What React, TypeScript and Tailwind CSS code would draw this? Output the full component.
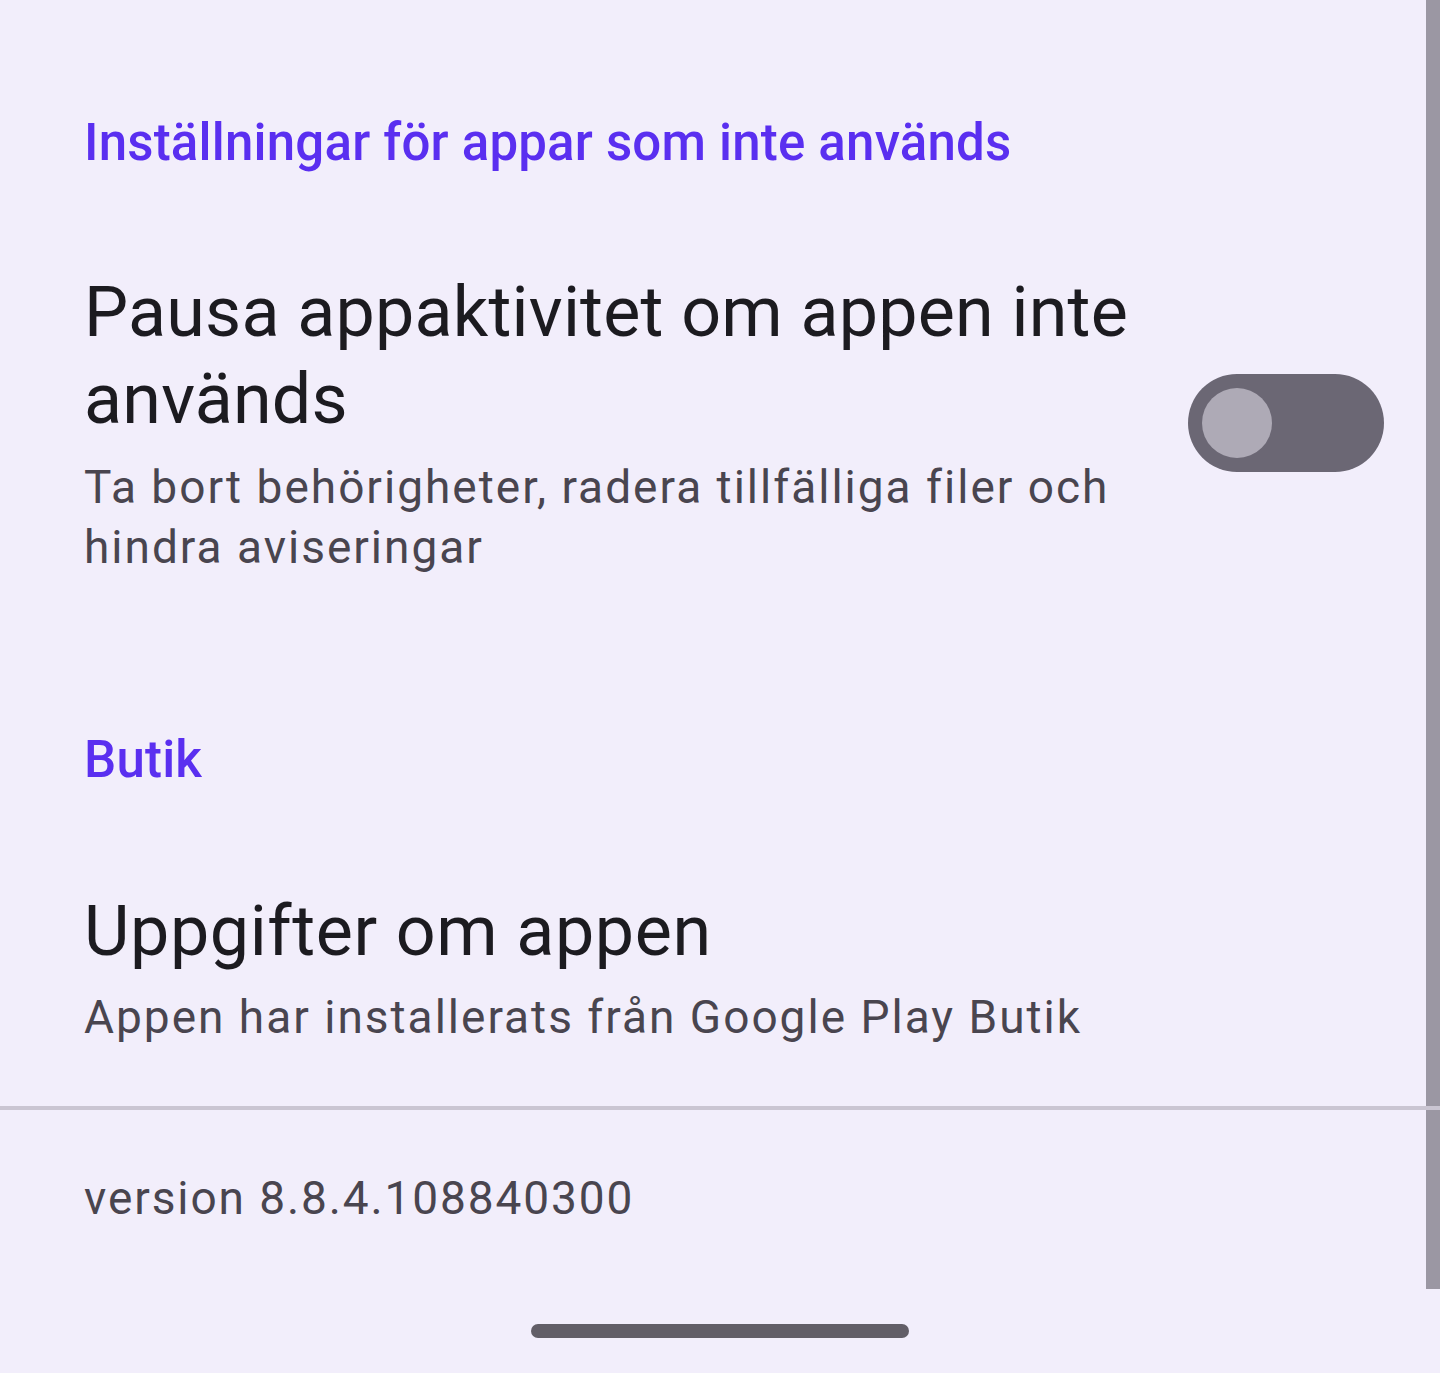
import React from 'react'

function Toggle() {
  return (
    <div className="flex h-[98px] w-[196px] shrink-0 items-center rounded-full bg-[#6b6774] px-[14px]">
      <div className="h-[70px] w-[70px] rounded-full bg-[#aeaab6]" />
    </div>
  )
}

export default function App() {
  return (
    <div
      className="relative flex h-[1373px] w-[1440px] flex-col overflow-hidden bg-[#f2eefb]"
      style={{ fontFamily: 'Roboto, "Open Sans", sans-serif' }}
    >
      {/* scrollbar overlay */}
      <div className="absolute right-0 top-0 h-[1289px] w-[14px] bg-[#9b97a3]" />

      <div className="pl-[84px] pr-[56px]">
        <h2 className="mt-[113px] text-[51px] leading-[60px] font-medium tracking-[0.2px] text-[#5a2ff0]">
          Inställningar för appar som inte används
        </h2>

        <div className="mt-[96px] flex items-center">
          <div className="flex-1 pr-[40px]">
            <div className="text-[70px] leading-[87px] tracking-[0.2px] text-[#1c1b20]">
              Pausa appaktivitet om appen inte används
            </div>
            <div className="mt-[14px] text-[46px] leading-[60px] tracking-[2px] text-[#49454f]">
              Ta bort behörigheter, radera tillfälliga filer och hindra aviseringar
            </div>
          </div>
          <Toggle />
        </div>

        <h2 className="mt-[153px] text-[51px] leading-[60px] font-medium tracking-[0.2px] text-[#5a2ff0]">Butik</h2>

        <div className="mt-[98px] text-[70px] leading-[87px] tracking-[0.6px] text-[#1c1b20]">Uppgifter om appen</div>
        <div className="mt-[12px] text-[46px] leading-[60px] tracking-[2px] text-[#49454f]">
          Appen har installerats från Google Play Butik
        </div>
      </div>

      {/* divider */}
      <div className="relative mt-[59px] h-[4px] w-full bg-[#cac5d2]" />

      <div className="mt-[58px] pl-[84px] text-[46px] leading-[60px] tracking-[1.9px] text-[#49454f]">
        version 8.8.4.108840300
      </div>

      {/* home indicator */}
      <div className="mt-auto mb-[35px] flex justify-center">
        <div className="h-[14px] w-[378px] rounded-full bg-[#625e67]" />
      </div>
    </div>
  )
}
